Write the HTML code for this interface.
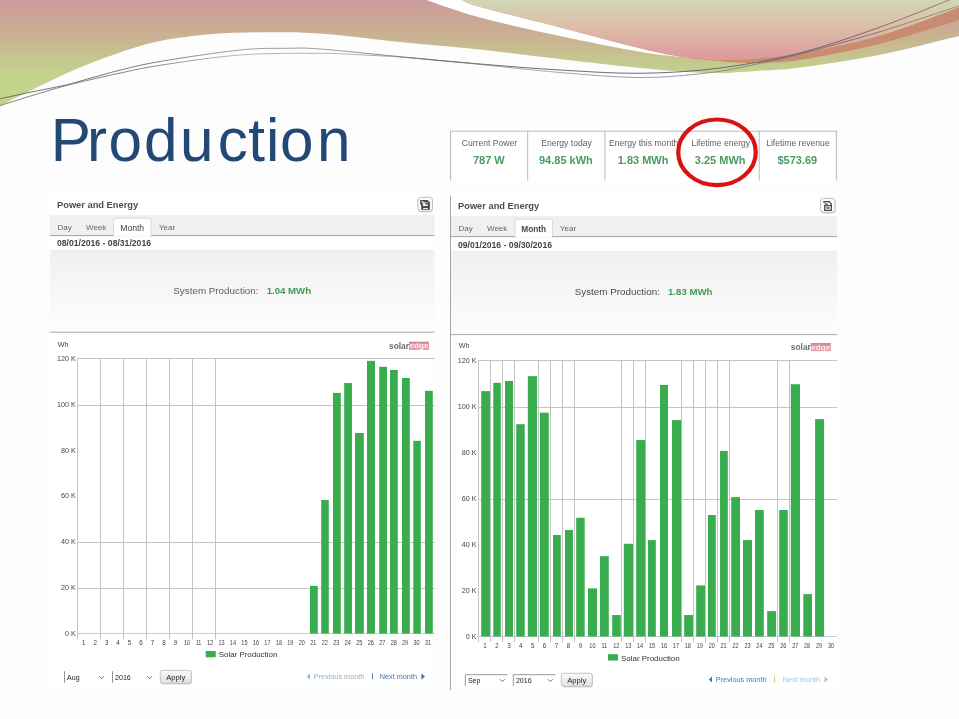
<!DOCTYPE html>
<html><head><meta charset="utf-8"><title>Production</title>
<style>
html,body{margin:0;padding:0;background:#fdfdfd;}
body{width:959px;height:719px;overflow:hidden;position:relative;font-family:"Liberation Sans",sans-serif;}
svg{position:absolute;left:0;top:0;display:block;font-family:"Liberation Sans",sans-serif;will-change:transform;transform:translateZ(0);}
</style></head><body>
<svg width="959" height="719" viewBox="0 0 959 719">
<defs>
<linearGradient id="gA" gradientUnits="userSpaceOnUse" x1="0" y1="0" x2="0" y2="76">
<stop offset="0" stop-color="#cd9a9c"/><stop offset="0.5" stop-color="#c9b392"/><stop offset="1" stop-color="#c4d48d"/></linearGradient>
<linearGradient id="gB" gradientUnits="userSpaceOnUse" x1="0" y1="0" x2="0" y2="58">
<stop offset="0" stop-color="#d0d7b4"/><stop offset="0.45" stop-color="#dcbfa9"/><stop offset="1" stop-color="#de9a9e"/></linearGradient>
<linearGradient id="gO" gradientUnits="userSpaceOnUse" x1="700" y1="0" x2="959" y2="0">
<stop offset="0" stop-color="#c8906a"/><stop offset="1" stop-color="#c98a72"/></linearGradient>
<linearGradient id="gL1" gradientUnits="userSpaceOnUse" x1="0" y1="0" x2="959" y2="0">
<stop offset="0" stop-color="#62635f"/><stop offset="0.15" stop-color="#6a6a6a"/><stop offset="0.24" stop-color="#a08e92"/><stop offset="0.36" stop-color="#9c8c92"/><stop offset="0.44" stop-color="#55606c"/><stop offset="0.8" stop-color="#5a5f70"/><stop offset="0.9" stop-color="#6d6259"/><stop offset="1" stop-color="#85756b"/></linearGradient>
<linearGradient id="gL2" gradientUnits="userSpaceOnUse" x1="0" y1="0" x2="959" y2="0">
<stop offset="0" stop-color="#6c6d66"/><stop offset="0.15" stop-color="#74716f"/><stop offset="0.24" stop-color="#b8a2a6"/><stop offset="0.38" stop-color="#b09ca2"/><stop offset="0.46" stop-color="#6a6f78"/><stop offset="0.55" stop-color="#9a9a9e"/><stop offset="0.75" stop-color="#84848c"/><stop offset="0.85" stop-color="#6b6470"/><stop offset="0.92" stop-color="#7b6c64"/><stop offset="1" stop-color="#8f7f76"/></linearGradient>
<linearGradient id="gGrey" x1="0" y1="0" x2="0" y2="1"><stop offset="0" stop-color="#f0f0f0"/><stop offset="1" stop-color="#fdfdfd"/></linearGradient>
<linearGradient id="gBtn" x1="0" y1="0" x2="0" y2="1"><stop offset="0" stop-color="#fafafa"/><stop offset="1" stop-color="#e2e2e2"/></linearGradient>
</defs>
<g id="banner">
<path d="M-2.0 -2.0L-2.0 107.0 C-1.7 106.8 -7.0 109.5 0.0 106.0 C7.0 102.5 26.7 92.4 40.0 86.0 C53.3 79.6 66.7 73.1 80.0 67.5 C93.3 61.9 106.7 56.9 120.0 52.5 C133.3 48.1 144.5 44.1 160.0 41.0 C175.5 37.9 195.2 35.5 213.0 34.0 C230.8 32.5 249.2 32.4 267.0 32.3 C284.8 32.2 297.8 31.9 320.0 33.5 C342.2 35.1 373.3 39.3 400.0 42.0 C426.7 44.7 453.3 46.7 480.0 49.5 C506.7 52.3 533.3 55.9 560.0 59.0 C586.7 62.1 615.5 65.7 640.0 68.0 C664.5 70.3 687.5 72.5 707.0 73.0 C726.5 73.5 741.5 71.9 757.0 71.0 C772.5 70.1 779.7 70.2 800.0 67.5 C820.3 64.8 852.5 60.2 879.0 55.0 C905.5 49.8 945.3 39.2 959.0 36.0 C972.7 32.8 960.7 35.6 961.0 35.5L961.0 -2.0Z" fill="url(#gA)"/>
<path d="M426.0 0.0 C435.0 2.9 457.7 11.5 480.0 17.5 C502.3 23.5 533.3 30.3 560.0 36.0 C586.7 41.7 620.0 48.3 640.0 51.8 C660.0 55.3 673.3 56.1 680.0 57.0L680.0 56.7 C673.3 55.3 660.0 53.2 640.0 48.3 C620.0 43.4 586.7 34.4 560.0 27.5 C533.3 20.6 496.3 11.6 480.0 7.0 C463.7 2.4 465.0 1.2 462.0 0.0Z" fill="#fff"/>
<path d="M462.0 0.0 C465.0 1.2 463.7 2.4 480.0 7.0 C496.3 11.6 533.3 20.6 560.0 27.5 C586.7 34.4 620.0 43.4 640.0 48.3 C660.0 53.2 667.5 54.8 680.0 56.7 C692.5 58.6 705.8 59.1 715.0 59.6 C724.2 60.1 728.0 60.0 735.0 59.8 C742.0 59.6 746.2 59.5 757.0 58.4 C767.8 57.3 779.7 57.0 800.0 53.3 C820.3 49.6 852.5 43.6 879.0 36.0 C905.5 28.4 945.3 12.3 959.0 7.5 C972.7 2.7 960.7 7.1 961.0 7.0L961.0 -2.0L462.0 -2.0Z" fill="url(#gB)"/>
<path d="M690.0 57.8 C694.2 58.1 707.5 59.3 715.0 59.6 C722.5 59.9 728.0 60.0 735.0 59.8 C742.0 59.6 746.2 59.5 757.0 58.4 C767.8 57.3 779.7 57.0 800.0 53.3 C820.3 49.6 852.5 43.6 879.0 36.0 C905.5 28.4 945.3 12.3 959.0 7.5 C972.7 2.7 960.7 7.1 961.0 7.0L961.0 19.5 C960.7 19.6 972.7 15.9 959.0 20.0 C945.3 24.1 905.5 37.3 879.0 44.0 C852.5 50.7 820.3 56.8 800.0 60.0 C779.7 63.2 767.8 62.6 757.0 63.0 C746.2 63.4 742.0 63.0 735.0 62.6 C728.0 62.2 722.5 61.6 715.0 60.8 C707.5 60.0 694.2 58.5 690.0 58.0Z" fill="url(#gO)"/>
<path d="M-2.0 99.2 C-1.7 99.1 -5.3 100.0 0.0 98.8 C5.3 97.6 19.2 94.6 30.0 92.3 C40.8 90.0 55.0 87.5 65.0 85.2 C75.0 82.9 80.8 80.8 90.0 78.3 C99.2 75.8 108.3 73.0 120.0 70.2 C131.7 67.4 140.0 64.9 160.0 61.5 C180.0 58.1 218.8 52.2 240.0 50.0 C261.2 47.8 273.7 48.5 287.0 48.3 C300.3 48.1 301.2 47.6 320.0 49.0 C338.8 50.4 373.3 54.2 400.0 56.7 C426.7 59.2 453.3 61.8 480.0 64.0 C506.7 66.2 533.3 68.5 560.0 70.0 C586.7 71.5 613.3 73.6 640.0 73.3 C666.7 73.0 693.3 71.4 720.0 68.0 C746.7 64.6 773.5 59.8 800.0 53.0 C826.5 46.2 854.2 36.3 879.0 27.5 C903.8 18.7 936.3 5.1 949.0 0.0 C961.7 -5.1 954.0 -2.5 955.0 -3.0" fill="none" stroke="url(#gL1)" stroke-width="0.9"/>
<path d="M-2.0 106.2 C-1.7 106.1 -5.3 107.3 0.0 105.6 C5.3 103.9 19.2 99.5 30.0 96.2 C40.8 92.9 55.0 88.6 65.0 85.9 C75.0 83.2 80.8 81.9 90.0 79.8 C99.2 77.7 108.3 75.5 120.0 73.1 C131.7 70.7 140.0 68.3 160.0 65.3 C180.0 62.3 213.3 57.0 240.0 55.0 C266.7 53.0 300.3 53.3 320.0 53.3 C339.7 53.2 346.8 54.2 358.0 54.7 C369.2 55.2 380.0 55.8 387.0 56.2 C394.0 56.6 391.2 56.3 400.0 57.0 C408.8 57.7 426.7 59.4 440.0 60.6 C453.3 61.8 460.0 62.4 480.0 64.4 C500.0 66.4 533.3 70.3 560.0 72.5 C586.7 74.7 615.5 77.4 640.0 77.5 C664.5 77.6 687.5 75.2 707.0 73.0 C726.5 70.8 741.5 67.2 757.0 64.0 C772.5 60.8 779.7 59.3 800.0 54.0 C820.3 48.7 852.5 40.0 879.0 32.0 C905.5 24.0 945.2 10.5 959.0 6.0 C972.8 1.5 961.5 5.2 962.0 5.0" fill="none" stroke="url(#gL2)" stroke-width="0.85"/>
</g>
<text x="50.8 86.9 108.6 144 180.1 217.7 248.3 265.9 279.9 317" y="161.3" font-size="60.2" fill="#224876">Production</text>
<g id="stats">
<rect x="450" y="129" width="387" height="53" fill="#fff"/>
<rect x="450.1" y="130.7" width="386.7" height="1" fill="#b9b9b9"/>
<rect x="450.1" y="130.7" width="1" height="50" fill="#b9b9b9"/>
<rect x="527.2" y="130.7" width="1" height="50" fill="#b9b9b9"/>
<rect x="604.4" y="130.7" width="1" height="50" fill="#b9b9b9"/>
<rect x="758.7" y="130.7" width="1" height="50" fill="#b9b9b9"/>
<rect x="835.8" y="130.7" width="1" height="50" fill="#b9b9b9"/>
<text x="489.4" y="146.0" font-size="8.60" fill="#606060" text-anchor="middle">Current Power</text>
<text x="488.8" y="163.7" font-size="11.00" fill="#4b9a63" font-weight="bold" text-anchor="middle">787 W</text>
<text x="566.5" y="146.0" font-size="8.60" fill="#606060" text-anchor="middle">Energy today</text>
<text x="565.9" y="163.7" font-size="11.00" fill="#4b9a63" font-weight="bold" text-anchor="middle">94.85 kWh</text>
<text x="643.7" y="146.0" font-size="8.60" fill="#606060" text-anchor="middle">Energy this month</text>
<text x="643.1" y="163.7" font-size="11.00" fill="#4b9a63" font-weight="bold" text-anchor="middle">1.83 MWh</text>
<text x="720.8" y="146.0" font-size="8.60" fill="#606060" text-anchor="middle">Lifetime energy</text>
<text x="720.2" y="163.7" font-size="11.00" fill="#4b9a63" font-weight="bold" text-anchor="middle">3.25 MWh</text>
<text x="797.9" y="146.0" font-size="8.60" fill="#606060" text-anchor="middle">Lifetime revenue</text>
<text x="797.3" y="163.7" font-size="11.00" fill="#4b9a63" font-weight="bold" text-anchor="middle">$573.69</text>
<ellipse cx="717" cy="152.3" rx="38.8" ry="32.8" fill="none" stroke="#db1212" stroke-width="4.2"/>
</g>
<g id="left">
<rect x="50.0" y="192.0" width="384.5" height="495.0" fill="#fff"/>
<text x="57.0" y="208.0" font-size="9.30" fill="#4d4d4d" font-weight="bold">Power and Energy</text>
<rect x="418.2" y="198.2" width="14.8" height="14.4" rx="3" fill="#c4c4c4" opacity="0.5"/>
<rect x="417.9" y="197.3" width="14.6" height="14" rx="3" fill="#fcfcfc" stroke="#b4b4b4" stroke-width="0.9"/>
<g transform="translate(420.1 199.8)"><path d="M0.1 0.1 H7.5 L9.8 2.4 V9.9 H1.1 V5 H0.1 Z" fill="#484848"/><path d="M1.9 1.5 L4.6 4.4" stroke="#fff" stroke-width="1.3" fill="none"/><path d="M4.9 2 V4.6 H2.6" stroke="#fff" stroke-width="0.9" fill="none"/><rect x="6.6" y="2.3" width="1.2" height="1" fill="#fff"/><rect x="3" y="4.7" width="4.7" height="1.5" fill="#fff"/><rect x="3" y="8.2" width="4.7" height="0.9" fill="#fff"/></g>
<rect x="50.0" y="215.0" width="384.5" height="20.5" fill="#f0f0f0"/>
<rect x="50.0" y="235.0" width="384.5" height="1.1" fill="#a9a9a9"/>
<path d="M113.5 236.5 V220.5 Q113.5 218.2 115.8 218.2 H148.7 Q151.0 218.2 151.0 220.5 V236.5 Z" fill="#fff" stroke="#d0d0d0" stroke-width="0.8"/>
<rect x="114.1" y="234.4" width="36.3" height="2.4" fill="#fff"/>
<text x="57.5" y="230.3" font-size="8.00" fill="#666">Day</text>
<text x="86.0" y="230.3" font-size="8.00" fill="#666">Week</text>
<text x="132.2" y="230.6" font-size="8.60" fill="#444" text-anchor="middle">Month</text>
<text x="159.0" y="230.3" font-size="8.00" fill="#666">Year</text>
<text x="57.0" y="246.4" font-size="8.63" fill="#444" font-weight="bold">08/01/2016 - 08/31/2016</text>
<rect x="50.0" y="250.0" width="384.5" height="82.0" fill="url(#gGrey)"/>
<rect x="50.0" y="331.7" width="384.5" height="1.1" fill="#b4b4b4"/>
<text x="173.3" y="293.7" font-size="9.84" fill="#5c5c5c">System Production:</text>
<text x="266.7" y="293.7" font-size="9.65" fill="#3f9a55" font-weight="bold">1.04 MWh</text>
<text x="57.7" y="346.7" font-size="7.20" fill="#444">Wh</text>
<g transform="translate(389.0 348.7) scale(1 1.1)">
<text x="0" y="0" font-size="8.4" font-weight="bold" fill="#6c6c6c">solar</text>
</g>
<rect x="409.0" y="341.8" width="20" height="8" fill="#e296a1"/>
<rect x="409.0" y="341.8" width="20" height="1.3" fill="#c98a94"/>
<g transform="translate(409.5 348.4) scale(1 1.0)">
<text x="0" y="0" font-size="8.1" font-weight="bold" fill="#fff" opacity="0.85">edge</text>
</g>
<rect x="77.0" y="633" width="358.0" height="1" fill="#c3cbd6"/>
<text x="75.7" y="635.9" font-size="7.20" fill="#444" text-anchor="end">0 K</text>
<rect x="77.0" y="588" width="358.0" height="1" fill="#c4c4c4"/>
<text x="75.7" y="590.1" font-size="7.20" fill="#444" text-anchor="end">20 K</text>
<rect x="77.0" y="542" width="358.0" height="1" fill="#c4c4c4"/>
<text x="75.7" y="544.2" font-size="7.20" fill="#444" text-anchor="end">40 K</text>
<text x="75.7" y="498.4" font-size="7.20" fill="#444" text-anchor="end">60 K</text>
<text x="75.7" y="452.6" font-size="7.20" fill="#444" text-anchor="end">80 K</text>
<rect x="77.0" y="405" width="358.0" height="1" fill="#c4c4c4"/>
<text x="75.7" y="406.7" font-size="7.20" fill="#444" text-anchor="end">100 K</text>
<rect x="77.0" y="358" width="358.0" height="1" fill="#c4c4c4"/>
<text x="75.7" y="360.9" font-size="7.20" fill="#444" text-anchor="end">120 K</text>
<rect x="77" y="358" width="1" height="281.4" fill="#c4c4c4"/>
<rect x="100" y="358" width="1" height="281.4" fill="#c4c4c4"/>
<rect x="123" y="358" width="1" height="281.4" fill="#c4c4c4"/>
<rect x="146" y="358" width="1" height="281.4" fill="#c4c4c4"/>
<rect x="169" y="358" width="1" height="281.4" fill="#c4c4c4"/>
<rect x="192" y="358" width="1" height="281.4" fill="#c4c4c4"/>
<rect x="215" y="358" width="1" height="281.4" fill="#c4c4c4"/>
<rect x="310.00" y="585.86" width="7.80" height="47.74" fill="#39ad4e"/>
<rect x="321.20" y="499.92" width="7.60" height="133.68" fill="#39ad4e"/>
<rect x="333.00" y="392.90" width="7.80" height="240.70" fill="#39ad4e"/>
<rect x="344.20" y="383.05" width="7.80" height="250.55" fill="#39ad4e"/>
<rect x="355.00" y="433.01" width="8.80" height="200.59" fill="#39ad4e"/>
<rect x="367.00" y="360.82" width="8.00" height="272.78" fill="#39ad4e"/>
<rect x="379.20" y="366.78" width="7.80" height="266.82" fill="#39ad4e"/>
<rect x="390.00" y="369.99" width="7.80" height="263.61" fill="#39ad4e"/>
<rect x="402.00" y="378.01" width="7.80" height="255.59" fill="#39ad4e"/>
<rect x="413.30" y="440.80" width="7.50" height="192.80" fill="#39ad4e"/>
<rect x="425.00" y="390.84" width="7.80" height="242.76" fill="#39ad4e"/>
<text transform="translate(83.7 644.8) scale(0.90 1)" font-size="6.9" fill="#404040" text-anchor="middle">1</text>
<text transform="translate(95.2 644.8) scale(0.90 1)" font-size="6.9" fill="#404040" text-anchor="middle">2</text>
<text transform="translate(106.7 644.8) scale(0.90 1)" font-size="6.9" fill="#404040" text-anchor="middle">3</text>
<text transform="translate(118.1 644.8) scale(0.90 1)" font-size="6.9" fill="#404040" text-anchor="middle">4</text>
<text transform="translate(129.6 644.8) scale(0.90 1)" font-size="6.9" fill="#404040" text-anchor="middle">5</text>
<text transform="translate(141.1 644.8) scale(0.90 1)" font-size="6.9" fill="#404040" text-anchor="middle">6</text>
<text transform="translate(152.6 644.8) scale(0.90 1)" font-size="6.9" fill="#404040" text-anchor="middle">7</text>
<text transform="translate(164.1 644.8) scale(0.90 1)" font-size="6.9" fill="#404040" text-anchor="middle">8</text>
<text transform="translate(175.5 644.8) scale(0.90 1)" font-size="6.9" fill="#404040" text-anchor="middle">9</text>
<text transform="translate(187.0 644.8) scale(0.80 1)" font-size="6.9" fill="#404040" text-anchor="middle">10</text>
<text transform="translate(198.5 644.8) scale(0.80 1)" font-size="6.9" fill="#404040" text-anchor="middle">11</text>
<text transform="translate(210.0 644.8) scale(0.80 1)" font-size="6.9" fill="#404040" text-anchor="middle">12</text>
<text transform="translate(221.5 644.8) scale(0.80 1)" font-size="6.9" fill="#404040" text-anchor="middle">13</text>
<text transform="translate(232.9 644.8) scale(0.80 1)" font-size="6.9" fill="#404040" text-anchor="middle">14</text>
<text transform="translate(244.4 644.8) scale(0.80 1)" font-size="6.9" fill="#404040" text-anchor="middle">15</text>
<text transform="translate(255.9 644.8) scale(0.80 1)" font-size="6.9" fill="#404040" text-anchor="middle">16</text>
<text transform="translate(267.4 644.8) scale(0.80 1)" font-size="6.9" fill="#404040" text-anchor="middle">17</text>
<text transform="translate(278.9 644.8) scale(0.80 1)" font-size="6.9" fill="#404040" text-anchor="middle">18</text>
<text transform="translate(290.3 644.8) scale(0.80 1)" font-size="6.9" fill="#404040" text-anchor="middle">19</text>
<text transform="translate(301.8 644.8) scale(0.80 1)" font-size="6.9" fill="#404040" text-anchor="middle">20</text>
<text transform="translate(313.3 644.8) scale(0.80 1)" font-size="6.9" fill="#404040" text-anchor="middle">21</text>
<text transform="translate(324.8 644.8) scale(0.80 1)" font-size="6.9" fill="#404040" text-anchor="middle">22</text>
<text transform="translate(336.3 644.8) scale(0.80 1)" font-size="6.9" fill="#404040" text-anchor="middle">23</text>
<text transform="translate(347.7 644.8) scale(0.80 1)" font-size="6.9" fill="#404040" text-anchor="middle">24</text>
<text transform="translate(359.2 644.8) scale(0.80 1)" font-size="6.9" fill="#404040" text-anchor="middle">25</text>
<text transform="translate(370.7 644.8) scale(0.80 1)" font-size="6.9" fill="#404040" text-anchor="middle">26</text>
<text transform="translate(382.2 644.8) scale(0.80 1)" font-size="6.9" fill="#404040" text-anchor="middle">27</text>
<text transform="translate(393.7 644.8) scale(0.80 1)" font-size="6.9" fill="#404040" text-anchor="middle">28</text>
<text transform="translate(405.1 644.8) scale(0.80 1)" font-size="6.9" fill="#404040" text-anchor="middle">29</text>
<text transform="translate(416.6 644.8) scale(0.80 1)" font-size="6.9" fill="#404040" text-anchor="middle">30</text>
<text transform="translate(428.1 644.8) scale(0.80 1)" font-size="6.9" fill="#404040" text-anchor="middle">31</text>
<rect x="205.7" y="651.0" width="10" height="6.3" fill="#39ad4e"/>
<text x="218.7" y="657.4" font-size="7.95" fill="#333">Solar Production</text>
<path d="M64.5 682.8 V671.2" fill="none" stroke="#959595" stroke-width="1"/>
<text x="67.1" y="680.0" font-size="7.05" fill="#222">Aug</text>
<path d="M99.3 676.2 l2.3 2.4 l2.3 -2.4" fill="none" stroke="#555" stroke-width="0.8"/>
<path d="M112.5 682.8 V671.2" fill="none" stroke="#959595" stroke-width="1"/>
<text x="115.1" y="680.0" font-size="7.05" fill="#222">2016</text>
<path d="M147.3 676.2 l2.3 2.4 l2.3 -2.4" fill="none" stroke="#555" stroke-width="0.8"/>
<rect x="160.8" y="671.0" width="31.2" height="13.6" rx="2.6" fill="#bbb" opacity="0.55"/>
<rect x="160.3" y="670.3" width="31" height="13" rx="2.6" fill="url(#gBtn)" stroke="#b5b5b5" stroke-width="0.8"/>
<text x="175.8" y="679.6" font-size="7.60" fill="#222" text-anchor="middle">Apply</text>
<path d="M306.7 676.5 l3.2 -3 v6 z" fill="#8fb2cc"/>
<text x="313.7" y="679.0" font-size="7.30" fill="#8fb2cc">Previous month</text>
<rect x="372.0" y="673.3" width="0.9" height="6.2" fill="#5a7aa5"/>
<text x="379.7" y="679.0" font-size="7.30" fill="#466fa6">Next month</text>
<path d="M425.0 676.5 l-3.6 -3 v6 z" fill="#466fa6"/>
</g>
<g id="right">
<rect x="450.5" y="193.0" width="386.5" height="495.0" fill="#fff"/>
<text x="458.0" y="209.0" font-size="9.30" fill="#4d4d4d" font-weight="bold">Power and Energy</text>
<rect x="820.8" y="199.3" width="14.8" height="14.4" rx="3" fill="#c4c4c4" opacity="0.5"/>
<rect x="820.5" y="198.4" width="14.6" height="14" rx="3" fill="#fcfcfc" stroke="#b4b4b4" stroke-width="0.9"/>
<g transform="translate(822.8 201.1)" fill="none" stroke="#484848" stroke-width="1.25" stroke-linejoin="miter"><path d="M0.5 0.55 H6.4 L8.6 2.9 V9.2 H1.9 V4.5 H8.6"/><path d="M3.4 6.9 H6.9" stroke-width="1.4"/><path d="M0.8 0.9 L3.9 4 M4.2 1.7 V4.2 H1.7" stroke-width="1"/></g>
<rect x="450.5" y="216.0" width="386.5" height="20.5" fill="#f0f0f0"/>
<rect x="450.5" y="236.0" width="386.5" height="1.1" fill="#a9a9a9"/>
<path d="M515.0 237.5 V221.5 Q515.0 219.2 517.3 219.2 H550.2 Q552.5 219.2 552.5 221.5 V237.5 Z" fill="#fff" stroke="#d0d0d0" stroke-width="0.8"/>
<rect x="515.6" y="235.4" width="36.3" height="2.4" fill="#fff"/>
<text x="458.5" y="231.3" font-size="8.00" fill="#666">Day</text>
<text x="487.0" y="231.3" font-size="8.00" fill="#666">Week</text>
<text x="533.7" y="231.6" font-size="8.30" fill="#444" font-weight="bold" text-anchor="middle">Month</text>
<text x="560.0" y="231.3" font-size="8.00" fill="#666">Year</text>
<text x="458.0" y="247.7" font-size="8.63" fill="#444" font-weight="bold">09/01/2016 - 09/30/2016</text>
<rect x="450.5" y="251.0" width="386.5" height="83.3" fill="url(#gGrey)"/>
<rect x="450.5" y="334.0" width="386.5" height="1.1" fill="#b4b4b4"/>
<text x="574.7" y="295.3" font-size="9.84" fill="#484848">System Production:</text>
<text x="668.0" y="295.3" font-size="9.65" fill="#3f9a55" font-weight="bold">1.83 MWh</text>
<text x="458.7" y="348.0" font-size="7.20" fill="#444">Wh</text>
<g transform="translate(790.8 350.0) scale(1 1.1)">
<text x="0" y="0" font-size="8.4" font-weight="bold" fill="#6c6c6c">solar</text>
</g>
<rect x="810.8" y="343.1" width="20" height="8" fill="#e296a1"/>
<rect x="810.8" y="343.1" width="20" height="1.3" fill="#c98a94"/>
<g transform="translate(811.3 349.7) scale(1 1.0)">
<text x="0" y="0" font-size="8.1" font-weight="bold" fill="#fff" opacity="0.85">edge</text>
</g>
<rect x="477.8" y="636" width="359.2" height="1" fill="#c3cbd6"/>
<text x="476.5" y="638.8" font-size="7.20" fill="#444" text-anchor="end">0 K</text>
<text x="476.5" y="592.8" font-size="7.20" fill="#444" text-anchor="end">20 K</text>
<text x="476.5" y="546.8" font-size="7.20" fill="#444" text-anchor="end">40 K</text>
<rect x="477.8" y="499" width="359.2" height="1" fill="#c4c4c4"/>
<text x="476.5" y="500.9" font-size="7.20" fill="#444" text-anchor="end">60 K</text>
<text x="476.5" y="454.9" font-size="7.20" fill="#444" text-anchor="end">80 K</text>
<rect x="477.8" y="407" width="359.2" height="1" fill="#c4c4c4"/>
<text x="476.5" y="408.9" font-size="7.20" fill="#444" text-anchor="end">100 K</text>
<rect x="477.8" y="360" width="359.2" height="1" fill="#c4c4c4"/>
<text x="476.5" y="362.9" font-size="7.20" fill="#444" text-anchor="end">120 K</text>
<rect x="478" y="360" width="1" height="282.3" fill="#c4c4c4"/>
<rect x="490" y="360" width="1" height="282.3" fill="#c4c4c4"/>
<rect x="502" y="360" width="1" height="282.3" fill="#c4c4c4"/>
<rect x="514" y="360" width="1" height="282.3" fill="#c4c4c4"/>
<rect x="538" y="360" width="1" height="282.3" fill="#c4c4c4"/>
<rect x="550" y="360" width="1" height="282.3" fill="#c4c4c4"/>
<rect x="562" y="360" width="1" height="282.3" fill="#c4c4c4"/>
<rect x="574" y="360" width="1" height="282.3" fill="#c4c4c4"/>
<rect x="621" y="360" width="1" height="282.3" fill="#c4c4c4"/>
<rect x="633" y="360" width="1" height="282.3" fill="#c4c4c4"/>
<rect x="645" y="360" width="1" height="282.3" fill="#c4c4c4"/>
<rect x="681" y="360" width="1" height="282.3" fill="#c4c4c4"/>
<rect x="693" y="360" width="1" height="282.3" fill="#c4c4c4"/>
<rect x="705" y="360" width="1" height="282.3" fill="#c4c4c4"/>
<rect x="717" y="360" width="1" height="282.3" fill="#c4c4c4"/>
<rect x="729" y="360" width="1" height="282.3" fill="#c4c4c4"/>
<rect x="777" y="360" width="1" height="282.3" fill="#c4c4c4"/>
<rect x="789" y="360" width="1" height="282.3" fill="#c4c4c4"/>
<rect x="481.20" y="391.11" width="8.80" height="245.39" fill="#39ad4e"/>
<rect x="493.30" y="382.83" width="7.50" height="253.67" fill="#39ad4e"/>
<rect x="505.00" y="380.99" width="8.00" height="255.51" fill="#39ad4e"/>
<rect x="516.20" y="424.22" width="8.50" height="212.28" fill="#39ad4e"/>
<rect x="527.80" y="376.16" width="9.20" height="260.34" fill="#39ad4e"/>
<rect x="540.00" y="412.72" width="8.80" height="223.78" fill="#39ad4e"/>
<rect x="553.00" y="535.04" width="7.80" height="101.46" fill="#39ad4e"/>
<rect x="565.00" y="529.98" width="8.00" height="106.52" fill="#39ad4e"/>
<rect x="576.20" y="517.79" width="8.50" height="118.71" fill="#39ad4e"/>
<rect x="588.00" y="588.38" width="9.00" height="48.12" fill="#39ad4e"/>
<rect x="600.00" y="556.19" width="8.80" height="80.31" fill="#39ad4e"/>
<rect x="612.20" y="615.05" width="8.60" height="21.45" fill="#39ad4e"/>
<rect x="623.80" y="543.77" width="9.20" height="92.73" fill="#39ad4e"/>
<rect x="636.20" y="440.08" width="9.10" height="196.42" fill="#39ad4e"/>
<rect x="648.00" y="540.09" width="7.80" height="96.41" fill="#39ad4e"/>
<rect x="660.00" y="384.90" width="8.00" height="251.60" fill="#39ad4e"/>
<rect x="672.00" y="420.08" width="9.20" height="216.42" fill="#39ad4e"/>
<rect x="684.20" y="615.05" width="8.80" height="21.45" fill="#39ad4e"/>
<rect x="696.20" y="585.39" width="8.80" height="51.11" fill="#39ad4e"/>
<rect x="708.00" y="515.03" width="7.80" height="121.47" fill="#39ad4e"/>
<rect x="720.00" y="450.89" width="7.80" height="185.61" fill="#39ad4e"/>
<rect x="731.20" y="497.10" width="8.80" height="139.40" fill="#39ad4e"/>
<rect x="743.00" y="540.09" width="9.00" height="96.41" fill="#39ad4e"/>
<rect x="755.00" y="509.98" width="8.80" height="126.52" fill="#39ad4e"/>
<rect x="767.20" y="611.14" width="8.90" height="25.36" fill="#39ad4e"/>
<rect x="779.20" y="509.98" width="8.60" height="126.52" fill="#39ad4e"/>
<rect x="790.80" y="384.21" width="9.20" height="252.29" fill="#39ad4e"/>
<rect x="803.30" y="594.13" width="8.70" height="42.37" fill="#39ad4e"/>
<rect x="815.10" y="419.16" width="9.00" height="217.34" fill="#39ad4e"/>
<text transform="translate(485.0 647.6) scale(0.90 1)" font-size="6.9" fill="#404040" text-anchor="middle">1</text>
<text transform="translate(496.9 647.6) scale(0.90 1)" font-size="6.9" fill="#404040" text-anchor="middle">2</text>
<text transform="translate(508.9 647.6) scale(0.90 1)" font-size="6.9" fill="#404040" text-anchor="middle">3</text>
<text transform="translate(520.8 647.6) scale(0.90 1)" font-size="6.9" fill="#404040" text-anchor="middle">4</text>
<text transform="translate(532.7 647.6) scale(0.90 1)" font-size="6.9" fill="#404040" text-anchor="middle">5</text>
<text transform="translate(544.6 647.6) scale(0.90 1)" font-size="6.9" fill="#404040" text-anchor="middle">6</text>
<text transform="translate(556.6 647.6) scale(0.90 1)" font-size="6.9" fill="#404040" text-anchor="middle">7</text>
<text transform="translate(568.5 647.6) scale(0.90 1)" font-size="6.9" fill="#404040" text-anchor="middle">8</text>
<text transform="translate(580.4 647.6) scale(0.90 1)" font-size="6.9" fill="#404040" text-anchor="middle">9</text>
<text transform="translate(592.4 647.6) scale(0.80 1)" font-size="6.9" fill="#404040" text-anchor="middle">10</text>
<text transform="translate(604.3 647.6) scale(0.80 1)" font-size="6.9" fill="#404040" text-anchor="middle">11</text>
<text transform="translate(616.2 647.6) scale(0.80 1)" font-size="6.9" fill="#404040" text-anchor="middle">12</text>
<text transform="translate(628.2 647.6) scale(0.80 1)" font-size="6.9" fill="#404040" text-anchor="middle">13</text>
<text transform="translate(640.1 647.6) scale(0.80 1)" font-size="6.9" fill="#404040" text-anchor="middle">14</text>
<text transform="translate(652.0 647.6) scale(0.80 1)" font-size="6.9" fill="#404040" text-anchor="middle">15</text>
<text transform="translate(664.0 647.6) scale(0.80 1)" font-size="6.9" fill="#404040" text-anchor="middle">16</text>
<text transform="translate(675.9 647.6) scale(0.80 1)" font-size="6.9" fill="#404040" text-anchor="middle">17</text>
<text transform="translate(687.8 647.6) scale(0.80 1)" font-size="6.9" fill="#404040" text-anchor="middle">18</text>
<text transform="translate(699.7 647.6) scale(0.80 1)" font-size="6.9" fill="#404040" text-anchor="middle">19</text>
<text transform="translate(711.7 647.6) scale(0.80 1)" font-size="6.9" fill="#404040" text-anchor="middle">20</text>
<text transform="translate(723.6 647.6) scale(0.80 1)" font-size="6.9" fill="#404040" text-anchor="middle">21</text>
<text transform="translate(735.5 647.6) scale(0.80 1)" font-size="6.9" fill="#404040" text-anchor="middle">22</text>
<text transform="translate(747.5 647.6) scale(0.80 1)" font-size="6.9" fill="#404040" text-anchor="middle">23</text>
<text transform="translate(759.4 647.6) scale(0.80 1)" font-size="6.9" fill="#404040" text-anchor="middle">24</text>
<text transform="translate(771.3 647.6) scale(0.80 1)" font-size="6.9" fill="#404040" text-anchor="middle">25</text>
<text transform="translate(783.2 647.6) scale(0.80 1)" font-size="6.9" fill="#404040" text-anchor="middle">26</text>
<text transform="translate(795.2 647.6) scale(0.80 1)" font-size="6.9" fill="#404040" text-anchor="middle">27</text>
<text transform="translate(807.1 647.6) scale(0.80 1)" font-size="6.9" fill="#404040" text-anchor="middle">28</text>
<text transform="translate(819.0 647.6) scale(0.80 1)" font-size="6.9" fill="#404040" text-anchor="middle">29</text>
<text transform="translate(831.0 647.6) scale(0.80 1)" font-size="6.9" fill="#404040" text-anchor="middle">30</text>
<rect x="608.0" y="654.2" width="10" height="6.3" fill="#39ad4e"/>
<text x="621.0" y="660.6" font-size="7.95" fill="#333">Solar Production</text>
<rect x="450.0" y="195.5" width="1" height="494.5" fill="#a6a6a6"/>
<path d="M465.3 686.0 V674.7 H507.6" fill="none" stroke="#9a9a9a" stroke-width="1"/>
<text x="467.9" y="683.0" font-size="7.05" fill="#222">Sep</text>
<path d="M500.1 679.2 l2.3 2.4 l2.3 -2.4" fill="none" stroke="#555" stroke-width="0.8"/>
<path d="M513.3 686.0 V674.7 H555.6" fill="none" stroke="#9a9a9a" stroke-width="1"/>
<text x="515.9" y="683.0" font-size="7.05" fill="#222">2016</text>
<path d="M548.1 679.2 l2.3 2.4 l2.3 -2.4" fill="none" stroke="#555" stroke-width="0.8"/>
<rect x="561.8" y="674.0" width="31.2" height="13.6" rx="2.6" fill="#bbb" opacity="0.55"/>
<rect x="561.3" y="673.3" width="31" height="13" rx="2.6" fill="url(#gBtn)" stroke="#b5b5b5" stroke-width="0.8"/>
<text x="576.8" y="682.6" font-size="7.60" fill="#222" text-anchor="middle">Apply</text>
<path d="M708.8 679.5 l3.2 -3 v6 z" fill="#3f7db4"/>
<text x="715.8" y="682.0" font-size="7.30" fill="#3f7db4">Previous month</text>
<rect x="774.2" y="676.3" width="0.9" height="6.2" fill="#d9b77a"/>
<text x="782.8" y="682.0" font-size="7.30" fill="#a8c3dc">Next month</text>
<path d="M828.1 679.5 l-3.6 -3 v6 z" fill="#a8c3dc"/>
</g>
</svg>
</body></html>
